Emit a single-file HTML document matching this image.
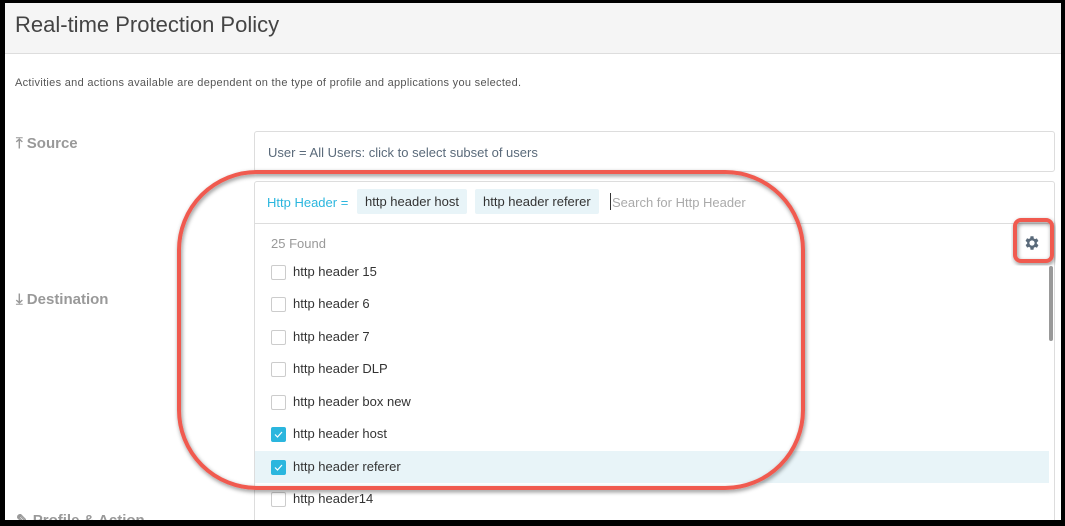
<!DOCTYPE html>
<html><head><meta charset="utf-8"><style>
*{box-sizing:border-box;margin:0;padding:0}
body{width:1065px;height:526px;background:#000;position:relative;overflow:hidden;font-family:"Liberation Sans",sans-serif}
.page{position:absolute;left:5px;top:3px;width:1056px;height:517px;background:#fff;overflow:hidden}
.hdr{position:absolute;left:0;top:0;width:1056px;height:51px;background:#f5f5f5;border-bottom:1px solid #ddd}
.hdr h1{position:absolute;left:10px;top:9px;font-weight:normal;font-size:22px;color:#444}
.abs{position:absolute}
.lbl{font-size:15px;color:#999;font-weight:bold}
.card{position:absolute;border:1px solid #ddd;border-radius:3px;background:#fff}
.tag{position:absolute;top:7px;height:25px;background:#e8f4f8;border-radius:2px;font-size:13px;color:#333;line-height:25px;padding:0 8px}
.row{position:absolute;left:0;width:794px;height:32px;font-size:13px;color:#333;line-height:32px}
.cb{position:absolute;left:16px;top:9px;width:15px;height:15px;border:1px solid #ccc;border-radius:2px;background:#fff}
.cb.on{background:#2bb6de;border-color:#2bb6de}
.cb svg{position:absolute;left:0;top:0;display:block}
.row span{position:absolute;left:38px}
</style></head><body>
<div class="page">
<div class="hdr"><h1>Real-time Protection Policy</h1></div>
<div class="abs" style="left:10px;top:74px;font-size:11px;color:#555;letter-spacing:0.3px">Activities and actions available are dependent on the type of profile and applications you selected.</div>
<div class="abs lbl" style="left:11px;top:132px">⤒ Source</div>
<div class="abs lbl" style="left:11px;top:288px">⤓ Destination</div>
<div class="abs lbl" style="left:11px;top:508px">✎ Profile &amp; Action</div>
<div class="card" style="left:249px;top:128px;width:801px;height:41px"><div class="abs" style="left:13px;top:13px;font-size:13px;color:#5a6a7a">User = All Users: click to select subset of users</div></div>
<div class="card" style="left:249px;top:178px;width:801px;height:345px">
 <div class="abs" style="left:12px;top:13px;font-size:13px;color:#2bb6de">Http Header =</div>
 <div class="tag" style="left:102px">http header host</div>
 <div class="tag" style="left:220px">http header referer</div>
 <div class="abs" style="left:355px;top:11px;width:1px;height:17px;background:#333"></div>
 <div class="abs" style="left:357px;top:13px;font-size:13px;color:#aaa">Search for Http Header</div>
 <div class="abs" style="left:0;top:41px;width:800px;border-top:1px solid #ddd"></div>
 <div class="abs" style="left:16px;top:54px;font-size:13px;color:#999">25 Found</div>
 <div class="row" style="top:74px"><div class="cb"></div><span>http header 15</span></div>
 <div class="row" style="top:106px"><div class="cb"></div><span>http header 6</span></div>
 <div class="row" style="top:139px"><div class="cb"></div><span>http header 7</span></div>
 <div class="row" style="top:171px"><div class="cb"></div><span>http header DLP</span></div>
 <div class="row" style="top:204px"><div class="cb"></div><span>http header box new</span></div>
 <div class="row" style="top:236px"><div class="cb on"><svg width="13" height="13" viewBox="0 0 13 13"><path d="M3 6.5l2.5 2.5L10 4" stroke="#fff" stroke-width="1.2" fill="none"/></svg></div><span>http header host</span></div>
 <div class="row" style="top:269px;background:#e8f4f8"><div class="cb on"><svg width="13" height="13" viewBox="0 0 13 13"><path d="M3 6.5l2.5 2.5L10 4" stroke="#fff" stroke-width="1.2" fill="none"/></svg></div><span>http header referer</span></div>
 <div class="row" style="top:301px"><div class="cb"></div><span>http header14</span></div>
 <div class="abs" style="left:794px;top:84px;width:4px;height:75px;background:#999;border-radius:2px"></div>
</div>
<svg class="abs" style="left:1018px;top:231px" width="18" height="18" viewBox="0 0 24 24"><path fill="#5a6a7a" d="M19.4 13a7.5 7.5 0 000-2l2.1-1.6-2-3.5-2.5 1a7.6 7.6 0 00-1.7-1L15 3h-4l-.4 2.7a7.6 7.6 0 00-1.7 1l-2.5-1-2 3.5L6.6 11a7.5 7.5 0 000 2l-2.1 1.6 2 3.5 2.5-1a7.6 7.6 0 001.7 1L11 21h4l.4-2.7a7.6 7.6 0 001.7-1l2.5 1 2-3.5zM13 15.5a3.5 3.5 0 110-7 3.5 3.5 0 010 7z" transform="translate(-1 0)"/></svg>
</div>
<svg class="abs" style="left:0;top:0" width="1065" height="526">
<defs><filter id="s" x="-10%" y="-10%" width="120%" height="120%"><feDropShadow dx="1" dy="2" stdDeviation="2" flood-color="#000" flood-opacity=".45"/></filter></defs>
<rect x="179" y="172" width="624" height="316" rx="78" fill="none" stroke="#f05a50" stroke-width="4" filter="url(#s)"/>
<rect x="1015" y="220" width="37" height="41" rx="6" fill="none" stroke="#f05a50" stroke-width="4" filter="url(#s)"/>
</svg>
</body></html>
